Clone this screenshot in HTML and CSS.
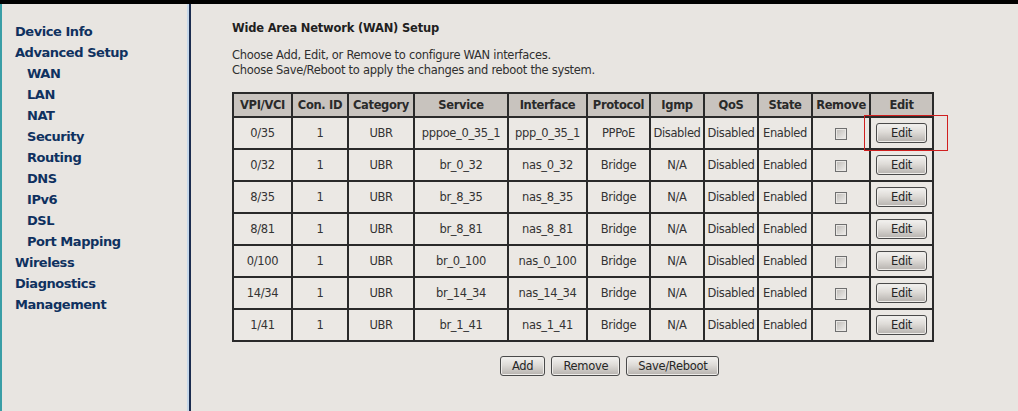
FILE: index.html
```html
<!DOCTYPE html>
<html>
<head>
<meta charset="utf-8">
<title>WAN Setup</title>
<link rel="stylesheet" href="styles.css">
</head>
<body>
<div class="topbar"></div>
<div class="layout">
  <nav class="sidebar">
    <a class="nav-item">Device Info</a>
    <a class="nav-item">Advanced Setup</a>
    <a class="nav-item sub">WAN</a>
    <a class="nav-item sub">LAN</a>
    <a class="nav-item sub">NAT</a>
    <a class="nav-item sub">Security</a>
    <a class="nav-item sub">Routing</a>
    <a class="nav-item sub">DNS</a>
    <a class="nav-item sub">IPv6</a>
    <a class="nav-item sub">DSL</a>
    <a class="nav-item sub">Port Mapping</a>
    <a class="nav-item">Wireless</a>
    <a class="nav-item">Diagnostics</a>
    <a class="nav-item">Management</a>
  </nav>
  <main class="content">
    <h1 class="title">Wide Area Network (WAN) Setup</h1>
    <p class="desc">Choose Add, Edit, or Remove to configure WAN interfaces.<br>Choose Save/Reboot to apply the changes and reboot the system.</p>
    <div class="table-wrap">
      <table class="wan">
        <colgroup>
          <col class="c1"><col class="c2"><col class="c3"><col class="c4"><col class="c5"><col class="c6"><col class="c7"><col class="c8"><col class="c9"><col class="c10"><col class="c11">
        </colgroup>
        <thead>
          <tr><th>VPI/VCI</th><th>Con. ID</th><th>Category</th><th>Service</th><th>Interface</th><th>Protocol</th><th>Igmp</th><th>QoS</th><th>State</th><th>Remove</th><th>Edit</th></tr>
        </thead>
        <tbody>
          <tr><td>0/35</td><td>1</td><td>UBR</td><td>pppoe_0_35_1</td><td>ppp_0_35_1</td><td>PPPoE</td><td>Disabled</td><td>Disabled</td><td>Enabled</td><td><input type="checkbox" class="chk"></td><td><button class="btn edit">Edit</button></td></tr>
          <tr><td>0/32</td><td>1</td><td>UBR</td><td>br_0_32</td><td>nas_0_32</td><td>Bridge</td><td>N/A</td><td>Disabled</td><td>Enabled</td><td><input type="checkbox" class="chk"></td><td><button class="btn edit">Edit</button></td></tr>
          <tr><td>8/35</td><td>1</td><td>UBR</td><td>br_8_35</td><td>nas_8_35</td><td>Bridge</td><td>N/A</td><td>Disabled</td><td>Enabled</td><td><input type="checkbox" class="chk"></td><td><button class="btn edit">Edit</button></td></tr>
          <tr><td>8/81</td><td>1</td><td>UBR</td><td>br_8_81</td><td>nas_8_81</td><td>Bridge</td><td>N/A</td><td>Disabled</td><td>Enabled</td><td><input type="checkbox" class="chk"></td><td><button class="btn edit">Edit</button></td></tr>
          <tr><td>0/100</td><td>1</td><td>UBR</td><td>br_0_100</td><td>nas_0_100</td><td>Bridge</td><td>N/A</td><td>Disabled</td><td>Enabled</td><td><input type="checkbox" class="chk"></td><td><button class="btn edit">Edit</button></td></tr>
          <tr><td>14/34</td><td>1</td><td>UBR</td><td>br_14_34</td><td>nas_14_34</td><td>Bridge</td><td>N/A</td><td>Disabled</td><td>Enabled</td><td><input type="checkbox" class="chk"></td><td><button class="btn edit">Edit</button></td></tr>
          <tr><td>1/41</td><td>1</td><td>UBR</td><td>br_1_41</td><td>nas_1_41</td><td>Bridge</td><td>N/A</td><td>Disabled</td><td>Enabled</td><td><input type="checkbox" class="chk"></td><td><button class="btn edit">Edit</button></td></tr>
        </tbody>
      </table>
      <div class="highlight"></div>
    </div>
    <div class="actions">
      <button class="btn">Add</button>
      <button class="btn">Remove</button>
      <button class="btn">Save/Reboot</button>
    </div>
  </main>
</div>
</body>
</html>
```

FILE: styles.css
```css
html, body {
  margin: 0;
  padding: 0;
  background: #e8e5e1;
  height: 100%;
  overflow: hidden;
}
body {
  font-family: "DejaVu Sans", Tahoma, sans-serif;
  font-size: 11px;
  color: #2b2b2b;
}
.topbar {
  height: 4px;
  background: #000;
}
.layout {
  display: flex;
  height: 407px;
  border-left: 2px solid #3a9ea6;
}
.sidebar {
  width: 187px;
  flex: none;
  display: flex;
  flex-direction: column;
  padding: 17px 0 0 13px;
  box-sizing: border-box;
  border-right: 2px solid #c6d8ea;
  box-shadow: 2px 0 0 #1b2c4f;
  margin-right: 2px;
}
.nav-item {
  font-family: "DejaVu Sans", Tahoma, sans-serif;
  font-weight: bold;
  font-size: 13px;
  letter-spacing: -0.45px;
  line-height: 21px;
  color: #0f315f;
  white-space: nowrap;
}
.nav-item.sub {
  padding-left: 12px;
}
.content {
  flex: 1;
  padding: 16px 0 0 41px;
}
.title {
  margin: 0;
  font-size: 11.5px;
  font-weight: bold;
  letter-spacing: -0.2px;
  line-height: 16px;
  color: #1f1f1f;
}
.desc {
  margin: 12px 0 0;
  font-size: 11.5px;
  letter-spacing: -0.3px;
  line-height: 15px;
  color: #2f2f2f;
}
.table-wrap {
  position: relative;
  margin-top: 14px;
  width: 704px;
}
.wan {
  border-collapse: collapse;
  table-layout: fixed;
  width: 702px;
  border: 2px solid #2a2a2a;
}
.c1 { width: 59px; }
.c2 { width: 56px; }
.c3 { width: 66px; }
.c4 { width: 94px; }
.c5 { width: 79px; }
.c6 { width: 63px; }
.c7 { width: 54px; }
.c8 { width: 54px; }
.c9 { width: 54px; }
.c10 { width: 58px; }
.c11 { width: 63px; }
.wan th, .wan td {
  border: 2px solid #2a2a2a;
  text-align: center;
  padding: 0;
  white-space: nowrap;
  overflow: hidden;
  letter-spacing: -0.35px;
}
.wan th {
  background: #c8c3be;
  height: 22px;
  font-weight: bold;
  font-size: 11.5px;
  color: #2a2a2a;
}
.wan td {
  background: #ebe8e4;
  height: 30px;
  font-size: 11.5px;
  color: #333;
}
.chk {
  appearance: none;
  -webkit-appearance: none;
  width: 12px;
  height: 12px;
  margin: 0;
  vertical-align: middle;
  border: 1px solid #6f6f6f;
  background: linear-gradient(135deg, #bdbab6, #f1efec);
  box-shadow: inset 0 0 0 1px #e9e7e4;
}
.btn {
  font-family: "DejaVu Sans", Tahoma, sans-serif;
  font-size: 11.5px;
  letter-spacing: -0.3px;
  color: #262626;
  height: 20px;
  padding: 0 11px;
  border: 1px solid #4a4a4a;
  border-radius: 3px;
  background: linear-gradient(#f3f2f0 0%, #dedbd7 45%, #b6b2ae 100%);
  box-shadow: inset 0 0 0 1px #efedea;
  vertical-align: middle;
  line-height: 18px;
}
.btn.edit {
  width: 51px;
  padding: 0;
}
.highlight {
  position: absolute;
  left: 632px;
  top: 23px;
  width: 82px;
  height: 34px;
  border: 1px solid #d01f1f;
  pointer-events: none;
}
.actions {
  display: flex;
  gap: 6px;
  padding-left: 268px;
  margin-top: 14px;
}
```
